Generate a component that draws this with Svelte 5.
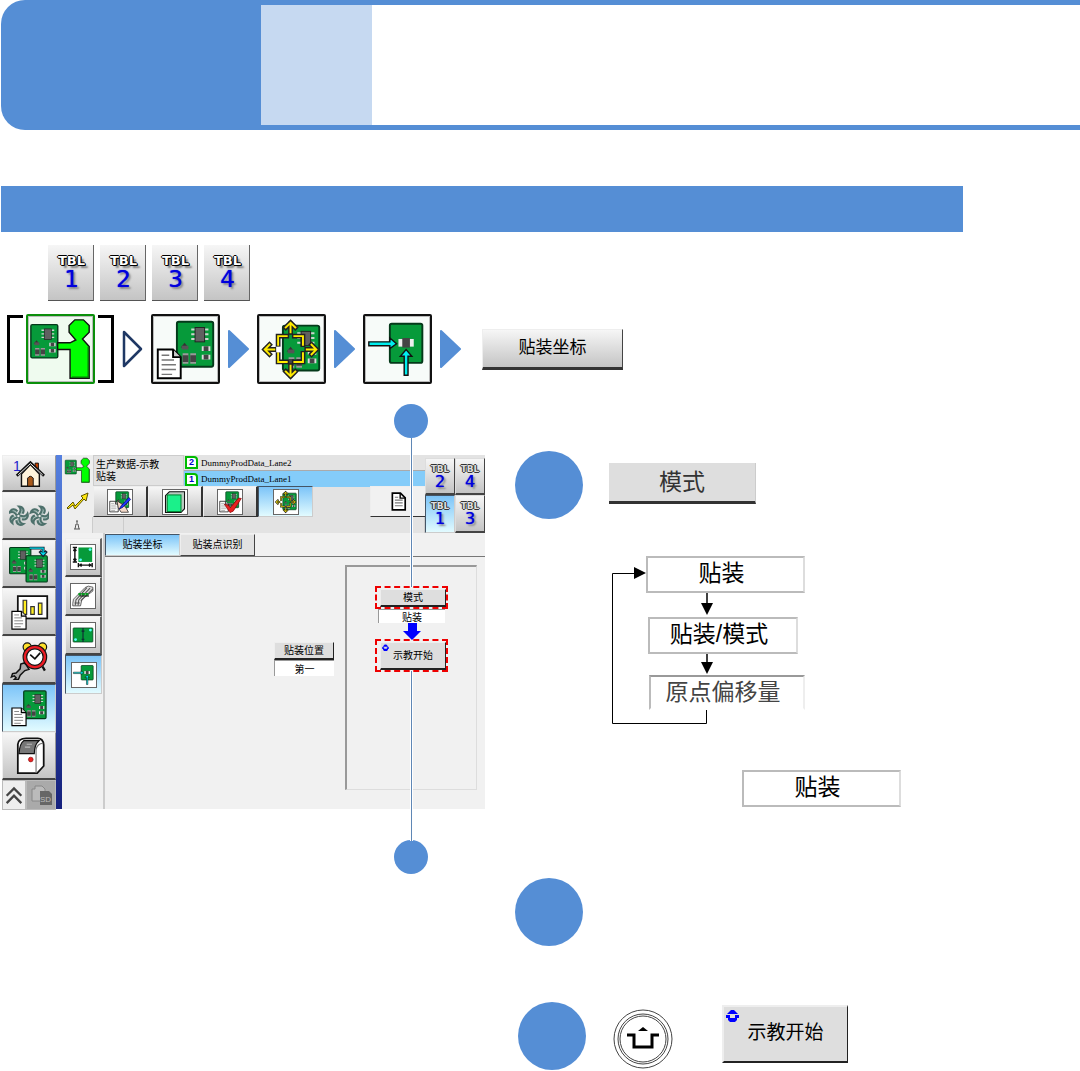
<!--
  示教操作说明页
  导航路径、操作画面与步骤说明
-->
<script lang="ts">
  type IconName =
    | 'person' | 'boardDoc' | 'teach' | 'mount' | 'home' | 'fans' | 'boards'
    | 'report' | 'alarm' | 'machine' | 'edit' | 'block' | 'check' | 'doc'
    | 'size' | 'feeder' | 'split';

  const tables = [1, 2, 3, 4];
  const screenTables = [2, 4, 1, 3];

  // 左侧主菜单
  const menu: { icon: IconName; label: string }[] = [
    { icon: 'home', label: '主页' },
    { icon: 'fans', label: '运转' },
    { icon: 'boards', label: '换产' },
    { icon: 'report', label: '生产信息' },
    { icon: 'alarm', label: '维护' },
    { icon: 'boardDoc', label: '生产数据' },
    { icon: 'machine', label: '机器' }
  ];

  const toolTabs: { icon: IconName; label: string }[] = [
    { icon: 'edit', label: '编辑' },
    { icon: 'block', label: '块' },
    { icon: 'check', label: '检查' },
    { icon: 'teach', label: '示教' }
  ];

  const subMenu: { icon: IconName; label: string }[] = [
    { icon: 'size', label: '基板尺寸' },
    { icon: 'feeder', label: '供料器' },
    { icon: 'split', label: '分割' },
    { icon: 'mount', label: '贴装' }
  ];

  let activeMenu = $state('boardDoc');
  let activeTool = $state('teach');
  let activeSub = $state('mount');
  let activeTable = $state(1);
  let activeTab = $state('贴装坐标');
</script>

<!-- 电路板，按 38x47 绘制 -->
{#snippet pcb(place: string)}
  <g transform={place}>
    <rect x="0" y="0" width="38" height="47" rx="2" fill="#069a3a" stroke="#04391a" stroke-width="2" />
    <path d="M15 8H33M15 13H33M15 18H33" stroke="#c9d8cd" stroke-width="2" />
    <rect x="19" y="6" width="10" height="15" fill="#606060" stroke="#222" />
    <path d="M4 27l4-5 4 5z" fill="#333" />
    <rect x="5" y="25" width="7" height="4" fill="#555" />
    <path d="M26 28h9M26 37h9" stroke="#ddd" stroke-width="5" />
    <path d="M28 28h5M28 37h5" stroke="#444" stroke-width="5" />
    <path d="M9 33v11M17 33v11" stroke="#999" stroke-width="6" />
    <path d="M9 35v7M17 35v7" stroke="#444" stroke-width="6" />
  </g>
{/snippet}

<!-- 文件页 -->
{#snippet sheet(place: string)}
  <g transform={place}>
    <path d="M0 0H16L24 8V30H0Z" fill="#fff" stroke="#000" stroke-width="2" />
    <path d="M16 0V8H24" fill="#ccc" stroke="#000" stroke-width="2" />
    <path d="M4 6H12M4 11H17M4 16H19M4 21H19M4 26H15" stroke="#777" stroke-width="1.5" />
  </g>
{/snippet}

{#snippet icon(name: IconName)}
  <svg class="icon" viewBox="0 0 68 68" aria-hidden="true">
    {#if name === 'person'}
      {@render pcb('translate(3 8) scale(.74)')}
      <path d="M31 27H44L50 24L43 16V9L49 3H58L64 9V16L57 23L64 31V64H44V34H31Z" fill="#0f0" stroke="#111" stroke-width="1.5" />
      <path d="M63 31V63H46" fill="none" stroke="#087a08" stroke-width="1.5" />
    {:else if name === 'boardDoc'}
      {@render pcb('translate(25 5)')}
      {@render sheet('translate(5 34)')}
    {:else if name === 'teach'}
      {@render pcb('translate(25 9)')}
      <g fill="none" stroke-linecap="square">
        <path d="M29 20H20V29M37 20H46V29M20 38V47H29M46 38V47H37" stroke="#222" stroke-width="5" />
        <path d="M33 16V7M28 11l5-5 5 5M33 51V61M28 57l5 5 5-5M16 34H7M11 29l-5 5 5 5M50 34H59M55 29l5 5-5 5" stroke="#222" stroke-width="5" />
        <path d="M29 20H20V29M37 20H46V29M20 38V47H29M46 38V47H37" stroke="#ffeb00" stroke-width="2" />
        <path d="M33 16V7M28 11l5-5 5 5M33 51V61M28 57l5 5 5-5M16 34H7M11 29l-5 5 5 5M50 34H59M55 29l5 5-5 5" stroke="#ffeb00" stroke-width="2" />
      </g>
      <rect x="18" y="31" width="5" height="6" fill="#fff" />
    {:else if name === 'mount'}
      <rect x="26" y="7" width="34" height="41" rx="2" fill="#069a3a" stroke="#04391a" stroke-width="2" />
      <rect x="35" y="23" width="16" height="8" fill="#eee" />
      <rect x="39" y="22" width="8" height="10" fill="#444" />
      <path d="M4 26H26V22L33 28L26 33V30H4Z" fill="#0ee" stroke="#111" stroke-width="1.5" />
      <path d="M41 61V41H37L43 34L49 41H45V61Z" fill="#0ee" stroke="#111" stroke-width="1.5" />
    {:else if name === 'home'}
      <path d="M18 36V62H56V36L37 16Z" fill="#fff4dc" stroke="#111" stroke-width="3" />
      <path d="M47 13h7v16l-7-6z" fill="#c40" stroke="#111" stroke-width="2" />
      <path d="M8 40L37 12L66 40" fill="none" stroke="#111" stroke-width="6" />
      <path d="M11 38L37 14L63 38" fill="none" stroke="#fff" stroke-width="2" />
      <path d="M31 62V45Q37 37 43 45V62Z" fill="#a8591a" stroke="#111" stroke-width="2" />
    {:else if name === 'fans'}
      {#each [16, 52] as cx}
        {#each [0, 72, 144, 216, 288] as turn}
          <path
            d="M0 -3C4 -7 5 -12 1 -16C8 -16 11 -9 7 -4"
            transform="translate({cx} 34) rotate({turn})"
            fill="#a5bcb8"
            stroke="#4d706b"
            stroke-width="3.5"
          />
        {/each}
        <circle {cx} cy="34" r="3" fill="#e8e8e8" stroke="#4d706b" stroke-width="2" />
      {/each}
    {:else if name === 'boards'}
      {@render pcb('translate(1 6) scale(.95)')}
      {@render pcb('translate(29 20) scale(.95)')}
      <path d="M35 7H58V17M52 12l6 7 6-7" fill="none" stroke="#123" stroke-width="5" />
      <path d="M35 7H58V17M54 14l4 4 4-4" fill="none" stroke="#0de" stroke-width="2" />
    {:else if name === 'report'}
      <rect x="15" y="7" width="50" height="38" fill="#fff" stroke="#111" stroke-width="3" />
      <path d="M24 38V14h6v24zM37 38V25h6v13zM50 38V19h6v19z" fill="#ffee20" stroke="#333" stroke-width="2" />
      {@render sheet('translate(5 33)')}
    {:else if name === 'alarm'}
      <circle cx="31" cy="12" r="7" fill="#ffe02a" stroke="#111" stroke-width="2" />
      <circle cx="57" cy="12" r="7" fill="#ffe02a" stroke="#111" stroke-width="2" />
      <path d="M31 45l-4 7M57 45l4 7" stroke="#111" stroke-width="4" />
      <circle cx="44" cy="29" r="20" fill="#ec1c24" stroke="#111" stroke-width="2" />
      <circle cx="44" cy="29" r="14" fill="#fff" stroke="#111" stroke-width="2" />
      <path d="M36 25l8 7 9-10" fill="none" stroke="#111" stroke-width="3" />
      <path d="M29 42l-3-3-6 2-1 8-7 7-6 1-2 6 5-2 3 3-3 3h7l3-7 8-8 7-2z" fill="#aaa" stroke="#111" stroke-width="2.5" />
    {:else if name === 'machine'}
      <path d="M15 63V14Q16 4 29 4H49Q58 4 59 15V51L48 63Z" fill="#fff" stroke="#111" stroke-width="3" />
      <path d="M46 63V23Q48 13 58 12" fill="none" stroke="#777" stroke-width="2" />
      <path d="M17 30Q18 13 25 8H51Q43 15 43 30Z" fill="#777" stroke="#111" stroke-width="2" />
      <path d="M30 14h9M27 19h9" stroke="#bbb" stroke-width="2" />
      <circle cx="37" cy="40" r="4" fill="#e22" stroke="#700" />
    {:else if name === 'edit' || name === 'check'}
      {@render pcb('translate(22 5) scale(.96)')}
      {@render sheet('translate(5 32)')}
      {#if name === 'edit'}
        <path d="M25 30L38 39L49 47L58 63H37L29 50Z" fill="#f4d9c9" stroke="#111" stroke-width="2" />
        <path d="M59 21L37 45L32 54L42 49L64 27Z" fill="#23f" stroke="#006" stroke-width="2" />
      {:else}
        <path d="M18 40L29 43L35 50L58 23L66 24L43 60L34 64Z" fill="#e82222" stroke="#800" stroke-width="2" />
      {/if}
    {:else if name === 'block'}
      <path d="M7 16L18 5H61V53L51 64H7Z" fill="#b9c9c0" stroke="#111" stroke-width="3" />
      <rect x="12" y="14" width="39" height="47" fill="#1bf08a" stroke="#083" stroke-width="3" />
    {:else if name === 'doc'}
      <path d="M12 4H41L58 21V64H12Z" fill="#fff" stroke="#000" stroke-width="6" />
      <path d="M40 4V22H58" fill="none" stroke="#000" stroke-width="5" />
      <path d="M21 19H33M21 29H49M21 39H49M21 49H49" stroke="#777" stroke-width="4" />
    {:else if name === 'size'}
      <path d="M21 7H60V48H21Z" fill="#069a3a" />
      <circle cx="27" cy="42" r="4" fill="#5ff" />
      <circle cx="54" cy="13" r="4" fill="#5ff" />
      <path d="M5 7H17M5 48H17M11 12V44M7 17l4-6 4 6M7 39l4 6 4-6M21 51V63M60 51V63M26 57H56M30 53l-5 4 5 4M51 53l5 4-5 4" fill="none" stroke="#111" stroke-width="4" />
    {:else if name === 'feeder'}
      <path d="M5 55L7 43L40 10L49 6L62 9V20L31 43L27 62H5Z" fill="#ddd" stroke="#333" stroke-width="2" />
      <path d="M12 61L14 45L45 10M20 61L22 45L54 12M28 48L62 14M10 54H25" fill="none" stroke="#555" stroke-width="3" />
      <path d="M21 29h8M31 29h8M41 29h8" stroke="#089a20" stroke-width="7" />
      <path d="M25 34h26" stroke="#111" stroke-width="3" />
    {:else if name === 'split'}
      <rect x="6" y="14" width="56" height="40" rx="2" fill="#069a3a" stroke="#04391a" stroke-width="2" />
      <path d="M34 14V54M30 23h8M30 46h8" stroke="#123" stroke-width="3" />
      <circle cx="13" cy="47" r="4" fill="#5ff" />
      <circle cx="55" cy="20" r="4" fill="#5ff" />
    {/if}
  </svg>
{/snippet}

{#snippet tableKey(no: number)}
  <span class="tbl">TBL</span>
  <span class="tbl-no">{no}</span>
{/snippet}

{#snippet chevron()}
  <svg class="chevron" viewBox="0 0 21 38" aria-hidden="true">
    <path d="M1 1L20 19L1 37Z" fill="#558ed5" stroke="#558ed5" stroke-width="2" stroke-linejoin="round" />
  </svg>
{/snippet}

<!-- 示教开始键左上角标记 -->
{#snippet startMark()}
  <svg class="mark" viewBox="0 0 13 13" aria-hidden="true">
    <path d="M1 5L5 1H8L12 5ZM0 6H4V9H9V6H13V9H11V11L9 13H4L2 11V9H0Z" fill="#00f" />
  </svg>
{/snippet}

<div class="page">
  <header class="banner">
    <div class="banner-chapter"></div>
    <div class="banner-section"></div>
    <div class="banner-title"></div>
  </header>

  <div class="heading-bar"></div>

  <div class="table-row">
    {#each tables as no}
      <button class="table-key">{@render tableKey(no)}</button>
    {/each}
  </div>

  <!-- 导航路径 -->
  <nav class="path" aria-label="导航路径">
    <div class="bracketed">
      <button class="path-icon person" aria-label="示教人员">{@render icon('person')}</button>
    </div>
    <svg class="chevron" viewBox="0 0 21 38" aria-hidden="true">
      <path d="M2 2L19 19L2 36Z" fill="#fff" stroke="#1f3864" stroke-width="2.5" stroke-linejoin="round" />
    </svg>
    <button class="path-icon" aria-label="生产数据">{@render icon('boardDoc')}</button>
    {@render chevron()}
    <button class="path-icon" aria-label="示教">{@render icon('teach')}</button>
    {@render chevron()}
    <button class="path-icon" aria-label="贴装">{@render icon('mount')}</button>
    {@render chevron()}
    <button class="path-key">贴装坐标</button>
  </nav>

  <main>
    <section class="figure">
      <div class="callout"></div>

      <div class="screen">
        <div class="menu">
          {#each menu as item}
            <button
              class="menu-key"
              class:home={item.icon === 'home'}
              class:active={activeMenu === item.icon}
              aria-label={item.label}
              onclick={() => (activeMenu = item.icon)}
            >
              {#if item.icon === 'home'}<span class="home-no">1</span>{/if}
              {@render icon(item.icon)}
            </button>
          {/each}
          <div class="menu-foot">
            <button aria-label="向上">
              <svg viewBox="0 0 24 28" aria-hidden="true">
                <path d="M4 15l8-8 8 8M4 23l8-8 8 8" fill="none" stroke="#444" stroke-width="2.5" />
              </svg>
            </button>
            <button class="sd" aria-label="SD">
              <svg viewBox="0 0 28 28" aria-hidden="true">
                <path d="M5 12V8H8V5H15L18 8V12L21 14V20H5Z" fill="#bbb" stroke="#888" />
                <path d="M13 10H22L25 13V24H13Z" fill="#666" />
                <text x="13" y="21" font-size="8" fill="#bbb">SD</text>
              </svg>
            </button>
          </div>
        </div>

        <div class="work">
          <div class="top">
            <div class="top-main">
              <div class="status">
                <div class="status-icon">{@render icon('person')}</div>
                <div class="status-title">生产数据-示教<br />贴装</div>
                <div class="lanes">
                  <div class="lane"><span class="lane-no">2</span>DummyProdData_Lane2</div>
                  <div class="lane active"><span class="lane-no">1</span>DummyProdData_Lane1</div>
                </div>
              </div>
              <div class="tools">
                <div class="flash">
                  <svg viewBox="0 0 24 24" aria-hidden="true">
                    <path d="M2 19L8 13L10 17L18 9L16 7L23 4L21 12L19 10L10 20L8 16L3 20Z" fill="#ffe810" stroke="#5c5200" />
                  </svg>
                </div>
                {#each toolTabs as item}
                  <button
                    class="tool"
                    class:active={activeTool === item.icon}
                    aria-label={item.label}
                    onclick={() => (activeTool = item.icon)}
                  >
                    <span class="framed">{@render icon(item.icon)}</span>
                  </button>
                {/each}
                <button class="tool doc" aria-label="文件">{@render icon('doc')}</button>
              </div>
              <div class="info">
                <span>
                  <svg viewBox="0 0 8 10" aria-hidden="true">
                    <path d="M3 1H5M4 1V5M3 4L2 9M5 4L6 9M1 9H7" fill="none" stroke="#555" />
                  </svg>
                </span>
                <span></span>
                <span></span>
              </div>
            </div>
            <div class="screen-tables">
              {#each screenTables as no}
                <button
                  class:active={activeTable === no}
                  onclick={() => (activeTable = no)}
                >{@render tableKey(no)}</button>
              {/each}
            </div>
          </div>

          <div class="body">
            <div class="sub">
              {#each subMenu as item}
                <button
                  class="sub-key"
                  class:active={activeSub === item.icon}
                  aria-label={item.label}
                  onclick={() => (activeSub = item.icon)}
                >
                  <span class="framed">{@render icon(item.icon)}</span>
                </button>
              {/each}
            </div>
            <div class="content">
              <div class="tabs">
                {#each ['贴装坐标', '贴装点识别'] as tab}
                  <button
                    class:active={activeTab === tab}
                    onclick={() => (activeTab = tab)}
                  >{tab}</button>
                {/each}
              </div>
              <div class="form">
                <div class="position">
                  <label class="key" for="position">贴装位置</label>
                  <input id="position" class="value" value="第一" readonly />
                </div>
                <div class="mode-box">
                  <div class="outlined">
                    <button class="key">模式</button>
                  </div>
                  <input class="value" aria-label="模式" value="贴装" readonly />
                  <svg class="down" viewBox="0 0 18 17" aria-hidden="true">
                    <path d="M5 0H14V8H18L9 17L0 8H5Z" fill="#00f" />
                  </svg>
                  <div class="outlined">
                    <button class="key start">{@render startMark()}示教开始</button>
                  </div>
                </div>
              </div>
            </div>
          </div>
        </div>
      </div>

      <div class="callout"></div>
      <div class="leader upper"></div>
      <div class="leader lower"></div>
    </section>

    <section class="steps">
      <div class="step">
        <div class="step-dot"></div>
        <button class="mode-key">模式</button>
      </div>

      <!-- 模式切换顺序 -->
      <div class="flow">
        <div class="state">贴装</div>
        <svg class="arrow" viewBox="0 0 12 24" aria-hidden="true">
          <path d="M6 0V12" stroke="#000" stroke-width="1.5" />
          <path d="M0 10H12L6 22Z" />
        </svg>
        <div class="state second">贴装/模式</div>
        <svg class="arrow" viewBox="0 0 12 24" aria-hidden="true">
          <path d="M6 0V12" stroke="#000" stroke-width="1.5" />
          <path d="M0 8H12L6 20Z" />
        </svg>
        <div class="state third">原点偏移量</div>
        <svg class="loop" viewBox="0 0 98 170" aria-hidden="true">
          <path d="M96.500 154V167.500H2.500V17.500H24" fill="none" stroke="#000" />
          <path d="M24 11L36 17L24 23Z" />
        </svg>
      </div>

      <div class="state result">贴装</div>

      <div class="step second">
        <div class="step-dot"></div>
      </div>

      <div class="step third">
        <div class="step-dot"></div>
        <button class="round-key" aria-label="开始">
          <svg viewBox="0 0 60 60" aria-hidden="true">
            <g fill="#fff" stroke="#444">
              <circle cx="30" cy="30" r="29" />
              <circle cx="30" cy="30" r="25" />
              <circle cx="30" cy="30" r="23" />
            </g>
            <path d="M14 26H21V38H39V26H46" fill="none" stroke="#000" stroke-width="3" />
            <path d="M25 22L30 18L35 22Z" />
          </svg>
        </button>
        <button class="start-key">{@render startMark()}示教开始</button>
      </div>
    </section>
  </main>
</div>

<style>
  :global(body) {
    margin: 0;
    background: #fff;
  }

  .page {
    --blue: #558ed5;
    --key: linear-gradient(#f6f6f6, #c4c4c4);
    --key-on: linear-gradient(#7cc4f8, #e2fbff);
    font-family: "Liberation Sans", "Noto Sans CJK SC", sans-serif;
    color: #000;
  }

  .page * {
    box-sizing: border-box;
  }

  button,
  input {
    margin: 0;
    padding: 0;
    border: 0;
    border-radius: 0;
    color: inherit;
    font: inherit;
  }

  svg {
    display: block;
  }

  /* 页眉 */
  .banner {
    display: grid;
    grid-template-columns: 260px 111px 1fr;
    margin-left: 1px;
    height: 130px;
  }

  .banner-chapter {
    border-radius: 24px 0 0 24px;
    background: var(--blue);
  }

  .banner-section,
  .banner-title {
    border: solid var(--blue);
    border-width: 5px 0;
  }

  .banner-section {
    background: #c6d9f1;
  }

  .heading-bar {
    height: 46px;
    margin: 56px 117px 0 1px;
    background: var(--blue);
  }

  /* TBL 键 */
  .table-row {
    display: flex;
    gap: 6px;
    margin: 13px 0 0 48px;
  }

  .table-key {
    display: flex;
    flex-direction: column;
    align-items: center;
    width: 46px;
    height: 56px;
    padding: 9px 0 0 2px;
    border-right: 1px solid #666;
    border-bottom: 1px solid #555;
    background: var(--key);
  }

  .tbl {
    color: #fff;
    font: bold 13px/14px "DejaVu Sans", sans-serif;
    text-shadow: 1px 0 #000, -1px 0 #000, 0 1px #000, 0 -1px #000, 1px 1px #000, 3px 3px 2px #777;
  }

  .tbl-no {
    color: #00d;
    font: 23px/22px "DejaVu Sans", sans-serif;
    text-shadow: 0 0 1px #00d, 2px 2px 2px #888;
  }

  /* 导航路径 */
  .path {
    display: flex;
    align-items: center;
    gap: 8px;
    margin: 13px 0 0 7px;
  }

  .bracketed {
    position: relative;
    padding: 0 19px;
  }

  .bracketed::before,
  .bracketed::after {
    content: '';
    position: absolute;
    top: 1px;
    bottom: 1px;
    width: 13px;
    border: 3px solid #000;
  }

  .bracketed::before {
    left: 0;
    border-right: 0;
  }

  .bracketed::after {
    right: 0;
    border-left: 0;
  }

  .path-icon {
    display: block;
    width: 69px;
    height: 70px;
    border: 2px solid #111;
    border-radius: 2px;
    background: #f7fbf9;
    box-shadow: inset 0 0 0 1px #bbb;
  }

  .path-icon.person {
    border-color: #0a8f0a;
    background: #effbef;
  }

  .chevron {
    width: 21px;
    height: 38px;
  }

  .path-key {
    width: 141px;
    height: 41px;
    margin-left: 13px;
    border: 1px solid #eee;
    border-right: 1px solid #444;
    border-bottom: 3px solid #333;
    background: var(--key);
    font-size: 17px;
    line-height: 36px;
  }

  /* 主体 */
  main {
    display: grid;
    grid-template-columns: 483fr 565fr;
    gap: 30px;
    margin: 20px 0 0 2px;
  }

  .figure {
    position: relative;
    display: flex;
    flex-direction: column;
    min-width: 0;
  }

  .callout {
    align-self: flex-end;
    width: 34px;
    height: 34px;
    margin-right: 57px;
    border-radius: 50%;
    background: var(--blue);
  }

  /* 引线 */
  .leader {
    position: absolute;
    right: 72px;
    width: 3px;
    border: solid #fff;
    border-width: 0 1px;
    background: #5f87b5;
  }

  .leader.upper {
    top: 34px;
    height: 149px;
  }

  .leader.lower {
    top: 267px;
    height: 170px;
  }

  /* 操作画面 */
  .screen {
    display: flex;
    margin: 17px 0 31px;
    background: #f1f1f1;
    font-size: 10px;
  }

  .menu {
    display: flex;
    flex-direction: column;
    width: 60px;
    border-right: 6px solid #3d5cc0;
    border-image: linear-gradient(#5681e0, #15207c) 1;
    border-width: 0 6px 0 0;
  }

  .menu-key {
    display: flex;
    align-items: center;
    justify-content: center;
    height: 48px;
    border: 1px solid #eee;
    border-right-color: #999;
    border-bottom: 2px solid #444;
    background: var(--key);
  }

  .menu-key .icon {
    width: 40px;
    height: 40px;
  }

  .menu-key.home {
    position: relative;
    height: 37px;
  }

  .menu-key.home .icon {
    width: 32px;
    height: 32px;
  }

  .home-no {
    position: absolute;
    left: 10px;
    top: 2px;
    color: #22c;
    font-size: 14px;
  }

  .menu-key.active,
  .tool.active,
  .sub-key.active,
  .screen-tables .active,
  .tabs .active {
    border: 1px solid #456;
    border-right-color: #ccc;
    border-bottom-color: #ccc;
    background: var(--key-on);
  }

  .menu-foot {
    display: grid;
    grid-template-columns: 24px 1fr;
    height: 29px;
  }

  .menu-foot button {
    border: 1px solid #bbb;
    background: #eee;
  }

  .menu-foot .sd {
    background: #aaa;
  }

  .work {
    flex: 1;
    display: flex;
    flex-direction: column;
    min-width: 0;
  }

  .top {
    display: flex;
    background: #e3e3e3;
  }

  .top-main {
    flex: 1;
    min-width: 0;
  }

  .status {
    display: flex;
    height: 31px;
  }

  .status-icon {
    width: 31px;
    padding: 2px;
    background: #eee;
  }

  .status-title {
    width: 91px;
    padding: 3px 2px;
    border: 1px solid #ccc;
    line-height: 12px;
    white-space: nowrap;
  }

  .lanes {
    flex: 1;
  }

  .lane {
    display: flex;
    align-items: center;
    gap: 3px;
    height: 16px;
    padding-left: 1px;
    border-bottom: 1px solid #aaa;
    font: 9px/14px "Liberation Serif", serif;
  }

  .lane.active {
    border-bottom: 0;
    background: #84ccf9;
  }

  .lane-no {
    width: 13px;
    height: 13px;
    border: 2px solid #0b0;
    border-top-right-radius: 4px;
    background: #fff;
    color: #00c;
    font: bold 9px/9px "Liberation Sans", sans-serif;
    text-align: center;
  }

  .tools {
    display: flex;
    height: 31px;
  }

  .flash {
    width: 31px;
    padding: 3px;
    background: #eee;
  }

  .flash svg {
    width: 24px;
    height: 24px;
  }

  .tool {
    display: flex;
    align-items: center;
    justify-content: center;
    width: 55px;
    border: 1px solid #eee;
    border-right: 2px solid #333;
    border-bottom: 1px solid #333;
    background: var(--key);
  }

  .tool.doc {
    margin-left: auto;
    border-right: 0;
    background: #f1f1f1;
  }

  .tool.doc .icon {
    width: 19px;
    height: 19px;
  }

  .framed {
    display: block;
    width: 26px;
    height: 26px;
    border: 1px solid #666;
    background: #fff;
  }

  .info {
    display: grid;
    grid-template-columns: 31px 31px 1fr;
    height: 16px;
  }

  .info span {
    display: flex;
    align-items: center;
    justify-content: center;
    border-right: 1px solid #ccc;
  }

  .info span:first-child {
    background: #eee;
  }

  .info svg {
    width: 8px;
    height: 10px;
  }

  .screen-tables {
    display: grid;
    grid-template-columns: 30px 30px;
    grid-template-rows: 37px 38px;
    align-content: end;
  }

  .screen-tables button {
    display: flex;
    flex-direction: column;
    align-items: center;
    padding-top: 5px;
    border: 1px solid #ddd;
    border-right: 1px solid #444;
    border-bottom: 2px solid #444;
    background: var(--key);
  }

  .screen-tables .tbl {
    color: #ddd;
    font-size: 9px;
    line-height: 10px;
    text-shadow: 1px 0 #333, -1px 0 #333, 0 1px #333, 0 -1px #333;
  }

  .screen-tables .tbl-no {
    font-size: 16px;
    line-height: 16px;
  }

  .body {
    flex: 1;
    display: flex;
  }

  .sub {
    display: flex;
    flex-direction: column;
    width: 43px;
    padding: 5px 1px 0 3px;
    border-right: 2px solid #ccc;
  }

  .sub-key {
    display: flex;
    align-items: center;
    justify-content: center;
    height: 39px;
    border: 1px solid #eee;
    border-right: 2px solid #666;
    border-bottom: 2px solid #444;
    background: var(--key);
  }

  .content {
    flex: 1;
    display: flex;
    flex-direction: column;
    min-width: 0;
  }

  .tabs {
    display: flex;
    height: 24px;
    padding-top: 1px;
    border-bottom: 1px solid #777;
  }

  .tabs button {
    width: 75px;
    border: 1px solid #eee;
    border-right: 1px solid #444;
    border-bottom: 1px solid #444;
    background: #e2e2e2;
    line-height: 20px;
  }

  .form {
    flex: 1;
    display: flex;
    justify-content: flex-end;
    padding: 8px 8px 19px 0;
  }

  .position {
    display: flex;
    flex-direction: column;
    width: 60px;
    margin: 77px 11px 0 0;
  }

  .key {
    display: block;
    width: 100%;
    height: 18px;
    border: 1px solid #eee;
    border-right: 1px solid #222;
    border-bottom: 2px solid #222;
    background: #dedede;
    line-height: 15px;
    text-align: center;
  }

  .value {
    width: 100%;
    height: 16px;
    border-top: 1px solid #999;
    border-left: 1px solid #999;
    background: #fff;
    text-align: center;
  }

  .mode-box {
    display: flex;
    flex-direction: column;
    align-items: center;
    width: 132px;
    padding-top: 19px;
    border: 1px solid #ddd;
    border-top: 2px solid #999;
    border-left: 2px solid #999;
  }

  .outlined {
    width: 73px;
    border: 2px dashed #e00;
    padding: 1px 0 0 3px;
  }

  .mode-box .value {
    width: 67px;
    height: 14px;
  }

  .down {
    width: 18px;
    height: 17px;
    margin-bottom: -1px;
  }

  .key.start {
    position: relative;
    height: 28px;
    line-height: 24px;
  }

  .mark {
    position: absolute;
    top: 2px;
    left: 2px;
    width: 13px;
    height: 13px;
  }

  .key.start .mark {
    top: 1px;
    left: 1px;
    width: 7px;
    height: 7px;
  }

  /* 步骤 */
  .steps {
    display: flex;
    flex-direction: column;
    align-items: flex-start;
    padding-top: 47px;
    font-size: 23px;
  }

  .step {
    display: flex;
    align-items: center;
    gap: 26px;
  }

  .step-dot {
    width: 68px;
    height: 68px;
    border-radius: 50%;
    background: var(--blue);
  }

  .mode-key {
    width: 147px;
    height: 41px;
    margin-bottom: 4px;
    border-right: 1px solid #ccc;
    border-bottom: 3px solid #333;
    background: #dedede;
    color: #333;
    line-height: 34px;
  }

  .flow {
    position: relative;
    display: flex;
    flex-direction: column;
    margin: 37px 0 0 131px;
  }

  .state {
    width: 159px;
    height: 37px;
    padding-right: 8px;
    border: 2px solid #bbb;
    border-right-color: #ddd;
    background: #fff;
    line-height: 30px;
    text-align: center;
  }

  .state.second {
    width: 150px;
    margin-left: 2px;
  }

  .state.third {
    width: 156px;
    height: 35px;
    margin: -3px 0 0 3px;
    border-color: #999 #eee #fff #bbb;
    color: #444;
  }

  .arrow {
    width: 12px;
    height: 24px;
    margin-left: 55px;
  }

  .loop {
    position: absolute;
    top: 0;
    left: -36px;
    width: 98px;
    height: 170px;
  }

  .state.result {
    margin: 60px 0 0 227px;
  }

  .step.second {
    margin-top: 71px;
  }

  .step.third {
    gap: 0;
    margin: 56px 0 0 3px;
  }

  .round-key {
    width: 60px;
    height: 60px;
    margin: 6px 0 0 27px;
    border-radius: 50%;
    background: none;
  }

  .start-key {
    position: relative;
    width: 126px;
    height: 58px;
    margin: 0 0 4px 49px;
    padding-bottom: 8px;
    border: 2px solid #eee;
    border-right: 1px solid #222;
    border-bottom: 2px solid #222;
    background: #dedede;
    font-size: 19px;
  }
</style>
